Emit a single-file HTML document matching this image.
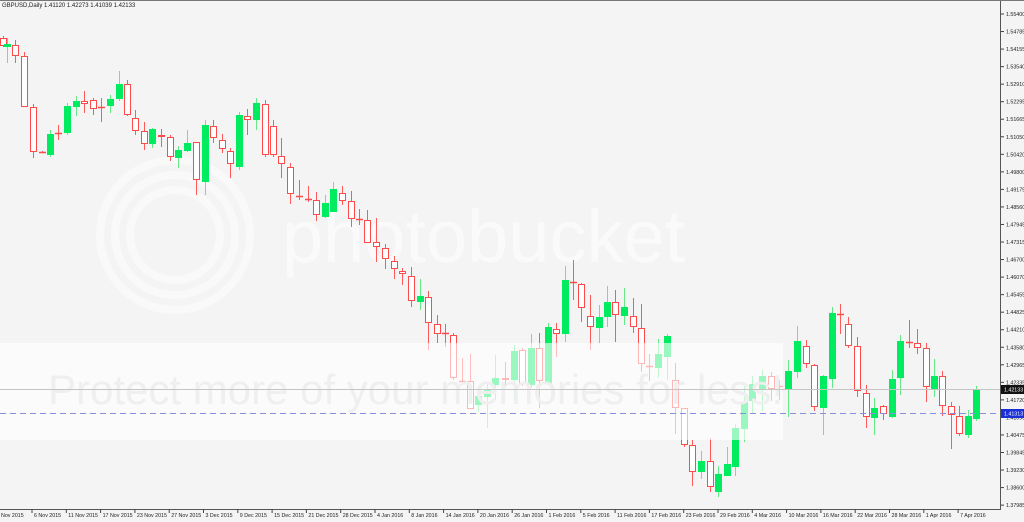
<!DOCTYPE html>
<html><head><meta charset="utf-8"><style>
html,body{margin:0;padding:0;background:#f4f4f4;width:1024px;height:522px;overflow:hidden}
svg{display:block}
text{font-family:"Liberation Sans",sans-serif}
</style></head><body>
<svg id="s" width="1024" height="522" xmlns="http://www.w3.org/2000/svg">
<rect width="1024" height="522" fill="#f4f4f4"/>
<g opacity="0.5" fill="none" stroke="#ffffff" stroke-width="8">
<circle cx="175" cy="235" r="75"/><circle cx="175" cy="235" r="60"/><circle cx="175" cy="235" r="45"/>
</g>
<text x="282" y="262" font-size="74" fill="#ffffff" opacity="0.6">photobucket</text>
<g id="c"></g>
<rect x="0" y="343" width="783" height="97" fill="#ffffff" opacity="0.6"/>
<text x="48" y="404" font-size="42" fill="#efefef">Protect more of your memories for less!</text>
<line x1="0" y1="389.5" x2="1000" y2="389.5" stroke="#c4c4c4" stroke-width="1"/>
<line x1="0" y1="413.5" x2="1000" y2="413.5" stroke="#8890dd" stroke-width="1" stroke-dasharray="6,4"/>
<rect x="1000" y="0" width="1" height="510" fill="#555"/>
<rect x="0" y="509" width="1001" height="1" fill="#555"/>
<rect x="0" y="0" width="1024" height="1" fill="#777"/>
<text x="2" y="7" font-size="6" fill="#222">GBPUSD,Daily  1.41120 1.42273 1.41039 1.42133</text>
<g id="ax" font-size="5.3" fill="#222"></g>
<rect x="1001" y="385" width="23" height="9" fill="#111"/>
<text x="1004" y="391.5" font-size="5.3" fill="#fff">1.42133</text>
<rect x="1001" y="409" width="23" height="9" fill="#1a2fd8"/>
<text x="1004" y="415.5" font-size="5.3" fill="#fff">1.41313</text>
</svg>
<script>
var d=[[3,38,46,36,47],[7,47,44,38,63],[15,45,56,40,63],[24,56,107,52,107],[33,107,152,104,158],[42,152,152,151,153],[50,155,134,130,157],[58,133,133,125,140],[67,133,106,103,135],[76,107,101,96,116],[84,101,104,91,113],[93,100,109,98,115],[101,107,107,98,122],[110,106,99,95,113],[119,99,84,71,101],[127,84,115,80,116],[135,118,131,110,135],[144,131,144,122,150],[152,144,129,128,148],[161,135,137,129,147],[170,137,157,135,161],[178,158,150,146,168],[187,151,143,130,152],[196,142,180,142,195],[205,182,125,120,195],[213,126,138,120,143],[222,140,149,134,153],[230,151,164,148,178],[239,167,115,112,170],[247,116,120,109,135],[256,120,103,98,130],[265,104,155,100,157],[273,126,155,120,157],[281,156,164,138,178],[290,167,194,163,204],[299,196,196,180,200],[308,199,199,186,202],[316,200,215,192,221],[325,217,203,195,218],[333,212,189,182,212],[342,193,201,186,205],[351,201,219,191,227],[359,219,219,209,225],[367,220,243,210,243],[376,242,247,218,262],[385,248,259,244,269],[394,261,269,256,279],[402,271,274,268,285],[411,276,301,267,307],[420,302,296,279,310],[428,297,323,291,350],[437,324,334,315,343],[445,333,333,324,347],[453,335,378,333,380],[462,381,381,358,382],[470,381,409,354,409],[478,405,396,390,412],[487,397,390,383,428],[495,385,378,355,400],[505,378,380,362,387],[514,380,351,345,401],[522,350,384,348,386],[531,385,348,334,388],[539,348,381,333,408],[548,384,327,323,385],[556,329,334,323,357],[565,334,280,266,342],[573,282,282,260,300],[581,284,308,283,322],[590,316,327,295,350],[599,328,317,305,343],[607,317,302,286,327],[615,302,315,290,342],[624,316,307,288,325],[633,316,327,298,333],[641,328,364,304,372],[649,366,366,354,381],[658,368,354,339,378],[667,357,336,334,380],[675,380,408,363,434],[684,408,445,408,447],[692,445,472,440,486],[701,472,461,451,479],[710,461,487,438,492],[718,492,474,466,497],[727,476,464,447,476],[735,467,428,424,476],[744,429,402,386,442],[752,401,384,376,413],[762,390,376,370,411],[771,376,389,372,401],[779,386,386,380,400],[788,389,371,360,417],[797,372,341,326,378],[806,346,364,340,368],[814,365,407,364,411],[823,408,376,375,435],[832,379,313,307,388],[840,314,314,304,334],[848,324,346,317,348],[857,346,391,337,397],[866,393,417,385,428],[874,418,408,398,435],[883,406,414,405,420],[892,417,379,370,418],[900,378,341,335,395],[909,342,342,320,348],[917,343,348,329,354],[926,348,387,343,402],[934,389,376,359,397],[942,376,406,371,416],[951,406,415,402,449],[959,416,434,406,436],[968,435,416,410,438],[976,419,390,386,421]];
var g=document.getElementById('c'),h='';
d.forEach(function(c){var x=c[0],o=c[1],cl=c[2],hi=c[3],lo=c[4];var bull=cl<o;
var col=bull?'#00ec60':'#ff4a4a';var wc=bull?'#66e888':'#ff5a5a';
h+='<line x1="'+(x+.5)+'" y1="'+hi+'" x2="'+(x+.5)+'" y2="'+lo+'" stroke="'+wc+'" stroke-width="1"/>';
var t=Math.min(o,cl),b=Math.max(o,cl);
if(b-t<1.5){h+='<line x1="'+(x-3)+'" y1="'+(t+.5)+'" x2="'+(x+4)+'" y2="'+(t+.5)+'" stroke="'+col+'" stroke-width="1.5"/>';}
else if(bull){h+='<rect x="'+(x-3)+'" y="'+t+'" width="7" height="'+(b-t)+'" fill="'+col+'"/>';}
else{h+='<rect x="'+(x-2.5)+'" y="'+(t+.5)+'" width="6" height="'+(b-t-1)+'" fill="#fff" stroke="'+col+'" stroke-width="1"/>';}
});
g.innerHTML=h;
var ax=document.getElementById('ax'),a='';
var L=['1.55400','1.54785','1.54155','1.53540','1.52910','1.52295','1.51665','1.51050','1.50420','1.49800','1.49175','1.48560','1.47945','1.47315','1.46700','1.46070','1.45455','1.44825','1.44210','1.43580','1.42965','1.42335','1.41720','1.41090','1.40475','1.39845','1.39230','1.38600','1.37985'];
for(var i=0;i<L.length;i++){var y=14+i*17.54;a+='<line x1="1001" y1="'+y+'" x2="1004" y2="'+y+'" stroke="#444"/><text x="1006" y="'+(y+2)+'">'+L[i]+'</text>';}
var D=['Nov 2015','6 Nov 2015','11 Nov 2015','17 Nov 2015','23 Nov 2015','27 Nov 2015','3 Dec 2015','9 Dec 2015','15 Dec 2015','21 Dec 2015','28 Dec 2015','4 Jan 2016','8 Jan 2016','14 Jan 2016','20 Jan 2016','26 Jan 2016','1 Feb 2016','5 Feb 2016','11 Feb 2016','17 Feb 2016','23 Feb 2016','29 Feb 2016','4 Mar 2016','10 Mar 2016','16 Mar 2016','22 Mar 2016','28 Mar 2016','1 Apr 2016','7 Apr 2016'];
for(var j=0;j<D.length;j++){var x=j==0?-1:(32+(j-1)*34.3);a+='<line x1="'+x+'" y1="509" x2="'+x+'" y2="513" stroke="#444"/><text x="'+(x+2)+'" y="517">'+D[j]+'</text>';}
ax.innerHTML=a;
</script>
</body></html>
